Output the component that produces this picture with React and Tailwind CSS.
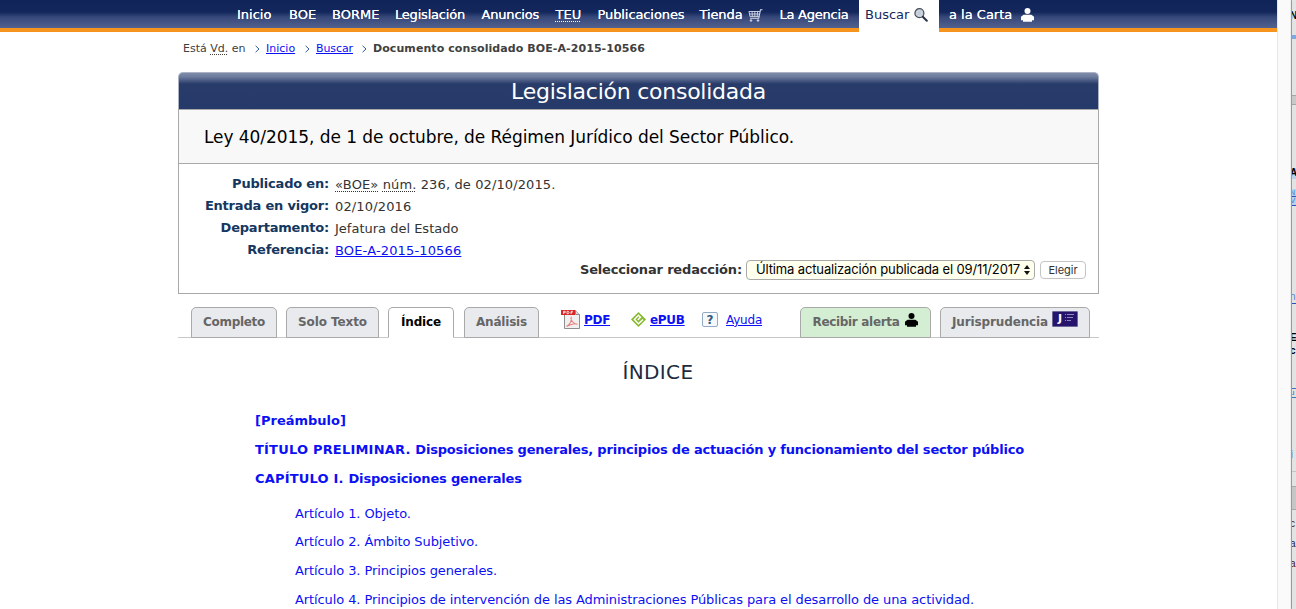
import React from "react";
import { clsx } from "clsx";

const CartIcon = () => (
  <svg width="15" height="13" viewBox="0 0 15 13" fill="none" stroke="#d5daea" className="ml-[5px]">
    <path d="M14.5 .7h-2l-1.8 8.6H2" strokeWidth="1.1" />
    <path d="M.8 2.5h11.3M1.3 5h10.3M1.8 7.4h9.4M1 2.5l1 5M4 2.5l.4 5M6.8 2.5v5M9.6 2.5l-.4 5" strokeWidth=".9" />
    <circle cx="3" cy="11.5" r=".8" fill="#d5daea" />
    <circle cx="10" cy="11.5" r=".8" fill="#d5daea" />
  </svg>
);

const SearchIcon = () => (
  <svg width="14" height="14" viewBox="0 0 14 14" fill="none" className="ml-[5px]">
    <circle cx="5.4" cy="5.2" r="4.5" fill="#c3ccd8" stroke="#4a4f58" strokeWidth="1.2" />
    <circle cx="5.4" cy="5.2" r="2.4" stroke="#e4eaf1" strokeWidth="1" strokeDasharray="1 1" />
    <path d="M8.8 8.7l4 4" stroke="#2b3345" strokeWidth="2" strokeLinecap="round" />
  </svg>
);

const UserIcon = ({ className }) => (
  <svg width="13" height="14" viewBox="0 0 13 14" fill="currentColor" className={className}>
    <circle cx="6.5" cy="3" r="3" />
    <path d="M2.6 6.700H10.400L13 8.800V12.300H11V13.800H2V12.300H0V8.800z" />
  </svg>
);

const PdfIcon = () => (
  <svg width="19" height="19" viewBox="0 0 19 19" fill="none">
    <path d="M3.5.5h11l4 4v14h-15z" fill="#f0f0f0" stroke="#8d8d8d" />
    <path d="M14.5.5v4h4" fill="#d9d9d9" stroke="#8d8d8d" />
    <path d="M5.5 16.5c3-1.5 5.2-5.5 4.7-9.8M9.8 8c.7 3.6 3 5.7 6.7 6.2-3.5-1.4-7 .1-11 2.3" stroke="#e87f7f" strokeWidth="1.1" />
    <rect y="0" width="14" height="5" fill="#d92525" />
    <path d="M2.5 4V1.3h1.7v1.4H2.8M6 1.3h1.3l.7.7v1l-.7.7H6zM10 4V1.300h2M10 2.600h1.500" stroke="#fff" strokeWidth=".8" />
  </svg>
);

const EpubIcon = () => (
  <svg width="15" height="15" viewBox="0 0 15 15" fill="none">
    <path d="M7.5 0L15 7.5L7.500 15L0 7.500z" fill="#86b92c" />
    <path d="M12 7.500L7.500 11.800L3.400 7.500L7.500 3.300L9.400 5.200L6.800 7.900" stroke="#fff" strokeWidth="1.500" />
  </svg>
);

const HelpIcon = () => (
  <span className="flex h-[15px] w-[16px] items-center justify-center rounded-[2px] border border-[#92aac2] bg-[#f6f9fc] text-[12px] font-bold leading-none text-[#35597f]">
    ?
  </span>
);

const CaseLawIcon = () => (
  <span className="ml-[4px] flex h-[16px] w-[26px] rounded-[1px] border border-[#6c6699] bg-[#26146c] pl-[5px] text-[11px] font-bold leading-[14px] text-white">
    J
    <svg width="9" height="8" viewBox="0 0 9 8" className="ml-[3px] mt-[2px]" stroke="#8f88bd" strokeWidth="1">
      <path d="M0 .5h1M2 .5h7M0 3.5h1M2 3.5h6M0 6.5h1M2 6.5h4" />
    </svg>
  </span>
);

const Chevron = () => (
  <svg width="5" height="8" viewBox="0 0 5 8" fill="none" stroke="#2c5f93">
    <path d="M.6 .8l3.4 3.2-3.4 3.2" />
  </svg>
);

const Abbr = ({ children }) => (
  <span className="underline decoration-dotted decoration-1 underline-offset-2">{children}</span>
);

const navItems = [
  { label: "Inicio", className: "w-[52px]" },
  { label: "BOE", className: "w-[43px]" },
  { label: "BORME", className: "w-[63px]" },
  { label: "Legislación", className: "w-[86.5px] tracking-[-0.2px]" },
  { label: "Anuncios", className: "w-[74px] tracking-[-0.18px]" },
  { label: "TEU", className: "w-[42px]", abbr: true },
  { label: "Publicaciones", className: "w-[102px] tracking-[-0.09px]" },
  { label: "Tienda", className: "w-[80px] tracking-[-0.1px]", icon: <CartIcon /> },
  { label: "La Agencia", className: "w-[79.5px] tracking-[-0.24px]" },
];

const metadata = [
  {
    label: "Publicado en:",
    value: (
      <>
        <Abbr>«BOE»</Abbr> <Abbr>núm.</Abbr> 236, de 02/10/2015.
      </>
    ),
    className: "tracking-[0.12px]",
  },
  { label: "Entrada en vigor:", value: "02/10/2016", className: "tracking-[0.15px]" },
  { label: "Departamento:", value: "Jefatura del Estado", className: "tracking-[0px]" },
  {
    label: "Referencia:",
    value: (
      <a href="#ref" className="text-[#0b10f5] underline">
        BOE-A-2015-10566
      </a>
    ),
    className: "tracking-[0.15px]",
  },
];

const sections = [
  { text: "[Preámbulo]" },
  {
    prefix: "TÍTULO PRELIMINAR.",
    text: "Disposiciones generales, principios de actuación y funcionamiento del sector público",
    className: "tracking-[-0.187px]",
  },
  { prefix: "CAPÍTULO I.", text: "Disposiciones generales", className: "tracking-[-0.17px]" },
];

const articles = [
  "Artículo 1. Objeto.",
  "Artículo 2. Ámbito Subjetivo.",
  "Artículo 3. Principios generales.",
  "Artículo 4. Principios de intervención de las Administraciones Públicas para el desarrollo de una actividad.",
];

// edge of the window that sits behind the browser
const behind = [
  { text: "N", className: "mt-[11px] h-[10px] font-bold text-black" },
  { className: "mt-[14px] h-[4px] bg-[#7fa9dc]" },
  { className: "mt-[56px] h-[10px] border-y border-[#a5a5a5] bg-[#c9c9c9]" },
  { text: "A", className: "mt-[63px] h-[11px] bg-[#b9d2ec] font-bold text-black" },
  { text: "N", className: "mt-[10px] h-[8px] border-b border-[#2b50b8] bg-[#b9d2ec] text-[7px] leading-[7px] text-[#3f7fc6]" },
  { text: "V", className: "h-[9px] border-b border-[#2b50b8] bg-[#b9d2ec] text-[8px] leading-[8px] text-[#3f7fc6]" },
  { text: "n", className: "mt-[86px] h-[12px] border-b border-[#2b50b8] text-[#5b7fc0]" },
  { text: "E", className: "mt-[29px] h-[11px] font-bold text-black" },
  { text: "c", className: "mt-[2px] h-[11px] font-bold text-black" },
  { text: "i", className: "mt-[23px] h-[9px] border-b border-[#3d72b8] text-[8px] leading-[8px] text-[#5a7a9c]" },
  { text: "u", className: "h-[9px] border-b border-[#3d72b8] text-[8px] leading-[8px] text-[#2c6fc8]" },
  { text: "i", className: "mt-[52px] h-[10px] font-bold text-[#1b1b50]" },
  { className: "mt-[11px] h-[15px] border-t border-[#c5c5c5]" },
  { className: "h-[24px] border-y border-[#a9a9a9] bg-[#c6c6c6]" },
  { text: "c", className: "mt-[9px] h-[12px] text-[#4d1212]" },
  { text: "a", className: "mt-[8px] h-[12px] text-[#1b1b4d]" },
  { text: "a", className: "mt-[8px] h-[12px] text-[#4d1212]" },
];

const Tab = ({ children, className }) => (
  <a
    href="#tab"
    className={clsx(
      "flex h-[31px] items-center justify-center whitespace-nowrap rounded-t-[5px] border border-[#a9a9a9] pb-px text-[12px] font-bold",
      className
    )}
  >
    {children}
  </a>
);

function TopNav() {
  return (
    <nav className="flex h-[32px] border-b-4 border-[#f7941e] bg-[linear-gradient(to_bottom,#10245a_0px,#13275c_12px,#364779_17px,#52628f_28px)] pl-[237px] text-[13px] text-white">
      {navItems.map(({ label, className, icon, abbr }) => (
        <a
          key={label}
          href="#nav"
          className={clsx("flex h-[29px] shrink-0 items-center whitespace-nowrap pt-px [text-shadow:0_0_0.6px_#fff]", className)}
        >
          <span className="leading-[14px]">{abbr ? <Abbr>{label}</Abbr> : label}</span>
          {icon}
        </a>
      ))}
      <a href="#buscar" className="flex h-[32px] w-[80px] items-center bg-white pb-[3px] pl-[6px] text-[#14285c]">
        Buscar
        <SearchIcon />
      </a>
      <a
        href="#carta"
        className="flex h-[29px] items-center whitespace-nowrap pl-[10px] pt-px [text-shadow:0_0_0.6px_#fff]"
      >
        a la Carta
        <UserIcon className="ml-[9px]" />
      </a>
    </nav>
  );
}

function Breadcrumb() {
  return (
    <div className="flex h-[32px] items-center whitespace-nowrap pl-[183px] pt-[2px] text-[11px] text-[#404040]">
      <span className="w-[72px] tracking-[0px]">
        Está <Abbr>Vd.</Abbr> en
      </span>
      <Chevron />
      <a href="#inicio" className="ml-[6px] w-[39px] text-[#0b10f5] underline">
        Inicio
      </a>
      <Chevron />
      <a href="#buscar" className="ml-[6px] w-[46px] tracking-[-0.09px] text-[#0b10f5] underline">
        Buscar
      </a>
      <Chevron />
      <span className="ml-[6px] font-bold tracking-[0.08px]">Documento consolidado BOE-A-2015-10566</span>
    </div>
  );
}

function Summary() {
  return (
    <section>
      <h1 className="h-[37px] rounded-t-[5px] border border-b-0 border-[#aab2c4] bg-[linear-gradient(to_bottom,#7f8cab_0px,#6c7a9d_4px,#283b69_11px,#263a69_36px)] text-center text-[22px] leading-[37px] tracking-[-0.25px] text-white">
        Legislación consolidada
      </h1>
      <div className="border border-[#a9a9a9] bg-white">
        <h2 className="h-[54px] border-b border-[#a9a9a9] bg-[#f8f8f8] pl-[25px] text-[17px] leading-[55px] tracking-[-0.06px] text-black">
          Ley 40/2015, de 1 de octubre, de Régimen Jurídico del Sector Público.
        </h2>
        <dl className="pt-[9px] text-[13px] text-[#333]">
          {metadata.map(({ label, value, className }) => (
            <div key={label} className="flex h-[22px] leading-[22px]">
              <dt className="w-[150px] text-right font-bold tracking-[-0.2px] text-[#14375f]">{label}</dt>
              <dd className={clsx("ml-[6px] pt-px", className)}>{value}</dd>
            </div>
          ))}
        </dl>
        <div className="-mt-px flex h-[33px] items-start justify-end pr-[12px]">
          <span className="mr-[4px] mt-px text-[13px] font-bold leading-[18px] tracking-[-0.17px] text-[#333]">
            Seleccionar redacción:
          </span>
          <button className="flex h-[20px] w-[289px] items-center justify-between rounded-[4px] border border-[#a9a9a9] bg-[#ffffee] pl-[9px] pr-[4px] font-[Inter,sans-serif] text-[13px] text-black">
            <span className="whitespace-nowrap tracking-[-0.14px]">Última actualización publicada el 09/11/2017</span>
            <svg width="6" height="10" viewBox="0 0 6 10" className="shrink-0">
              <path d="M3 0l3 4H0zM3 10l3-4H0z" fill="#111" />
            </svg>
          </button>
          <button className="ml-[5px] mt-px h-[18px] w-[46px] rounded-[4px] border border-[#c4c4c4] bg-white font-[Inter,sans-serif] text-[11px] leading-[16px] text-[#333]">
            Elegir
          </button>
        </div>
      </div>
    </section>
  );
}

function Tabs() {
  return (
    <div className="mt-[13px] flex h-[31px] border-b border-[#c8c8c8] pl-[13px] text-[#666]">
      <Tab className="w-[86px] bg-[#e8eaee] tracking-[-0.3px]">Completo</Tab>
      <Tab className="ml-[9px] w-[93px] bg-[#e8eaee] tracking-[-0.09px]">Solo Texto</Tab>
      <Tab className="ml-[9px] w-[66px] border-b-white bg-white tracking-[-0.2px] text-black">Índice</Tab>
      <Tab className="ml-[10px] w-[75px] bg-[#e8eaee] tracking-[-0.2px]">Análisis</Tab>
      <div className="ml-[22px] flex h-[25px] w-[239px] items-center text-[12px] text-[#0b10f5]">
        <PdfIcon />
        <a href="#pdf" className="ml-[4px] w-[47px] font-bold tracking-[-0.3px] underline">
          PDF
        </a>
        <EpubIcon />
        <a href="#epub" className="ml-[4px] w-[52px] font-bold tracking-[-0.3px] underline">
          ePUB
        </a>
        <HelpIcon />
        <a href="#ayuda" className="ml-[8px] tracking-[-0.2px] underline">
          Ayuda
        </a>
      </div>
      <Tab className="w-[131px] bg-[#d3eed3] tracking-[-0.32px]">
        Recibir alerta
        <UserIcon className="mb-[5px] ml-[5px] mr-px text-black" />
      </Tab>
      <Tab className="ml-[9px] w-[150px] bg-[#e8eaee] tracking-[-0.13px]">
        Jurisprudencia
        <span className="mb-[6px]">
          <CaseLawIcon />
        </span>
      </Tab>
    </div>
  );
}

function Index() {
  return (
    <section className="text-[13px] text-[#0b10f5]">
      <h3 className="mt-[20px] h-[28px] pl-[39px] text-center text-[20px] leading-[28px] tracking-[0.35px] text-[#1d2b40]">
        ÍNDICE
      </h3>
      <ul className="mt-[20px] pl-[77px] font-bold leading-[29px]">
        {sections.map(({ prefix, text, className }) => (
          <li key={text} className={clsx("whitespace-nowrap", className)}>
            {prefix && <span className="tracking-[0.2px]">{prefix} </span>}
            {text}
          </li>
        ))}
      </ul>
      <ul className="mt-[6.5px] whitespace-nowrap pl-[117px] leading-[28.7px] tracking-[-0.096px]">
        {articles.map((text) => (
          <li key={text}>{text}</li>
        ))}
      </ul>
    </section>
  );
}

export default function App() {
  return (
    <div className="flex h-[609px] w-[1296px] overflow-hidden bg-white font-['DejaVu_Sans',Verdana,sans-serif]">
      <main className="h-[609px] w-[1277px] shrink-0 overflow-hidden">
        <TopNav />
        <Breadcrumb />
        <div className="ml-[178px] mt-[8px] w-[921px]">
          <Summary />
          <Tabs />
          <Index />
        </div>
      </main>
      <div className="w-[15px] shrink-0 border-l border-[#e7e7e7] bg-[#fafafa]" />
      <aside className="w-[4px] shrink-0 overflow-hidden bg-[#e3e3e3] shadow-[-1px_0_1px_#8f8f8f] font-['Liberation_Sans',sans-serif] text-[10px]/[10px]">
        {behind.map(({ text, className }, i) => (
          <div key={i} className={clsx("overflow-hidden", className)}>
            {text && <span className="-ml-[2px] block">{text}</span>}
          </div>
        ))}
      </aside>
    </div>
  );
}
